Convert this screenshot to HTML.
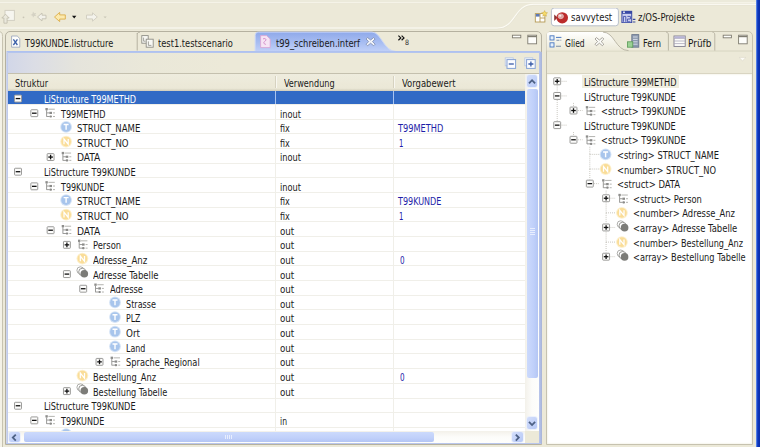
<!DOCTYPE html><html><head><meta charset="utf-8"><title>savvytest</title><style>
html,body{margin:0;padding:0;}body{width:760px;height:447px;overflow:hidden;position:relative;background:#ECE9D8;font-family:"DejaVu Sans Condensed", "Liberation Sans", sans-serif;font-size:9.7px;}
body div,body svg{position:absolute;}
.t{position:absolute;white-space:pre;line-height:14px;height:14px;transform-origin:0 50%;display:block;}
</style></head><body>
<div style="left:0.00px;top:0.00px;width:760.00px;height:2.00px;background:#ECEADB;"></div>
<div style="left:0.00px;top:2.00px;width:760.00px;height:1.00px;background:#F5F3E8;"></div>
<div style="left:0.00px;top:3.00px;width:760.00px;height:1.00px;background:#EBE8D8;"></div>
<svg style="left:0;top:0;width:760px;height:34px" viewBox="0 0 760 34"><path d="M0 28.2 H497 C516 28.2 514 4.4 533 4.4 H760" fill="none" stroke="#FCFBF5" stroke-width="1.2"/><path d="M0 29.2 H497 C516.6 29.2 514.6 5.4 533 5.4 H760" fill="none" stroke="#E6E3D3" stroke-width="0.8"/></svg>
<svg style="left:0;top:6px;width:120px;height:22px" viewBox="0 6 120 22">
<rect x="5" y="10.4" width="9.4" height="10" fill="#F6F5EF" stroke="#D2CFC2" stroke-width="1"/>
<path d="M1.8 18 l3.7-3.8 l3.7 3.8 h-2.1 v5.2 h-3.2 v-5.2z" fill="#EAE8DC" stroke="#BFBBAB" stroke-width="0.8"/>
<circle cx="23.5" cy="17.3" r="0.9" fill="#C9C6B6"/>
<path d="M33 11.5 l1.2 1.8 l2-0.4 l-1 1.8 l1 1.4 l-2 0 l-1.2 1.6 l-0.4-2 l-2-0.6 l1.8-1 z" fill="#D5D2C4"/>
<path d="M37.5 17 l4.5-4 v2.2 h4 v3.6 h-4 v2.2z" fill="#F2F1EA" stroke="#C4C1B2" stroke-width="0.9"/>
<path d="M54.5 17 l5.2-4.6 v2.5 h5.6 v4.2 h-5.6 v2.5z" fill="#FCEAAE" stroke="#DCAE48" stroke-width="0.9" stroke-linejoin="round"/>
<path d="M72 15.8 h4.4 l-2.2 2.6z" fill="#111"/>
<path d="M97.3 17 l-4.8-4.2 v2.3 h-6 v3.8 h6 v2.3z" fill="#F4F3EC" stroke="#CFCCBE" stroke-width="0.9"/>
<path d="M103.5 16.4 h3.2 l-1.6 1.9z" fill="#C9C6B6"/>
</svg>
<svg style="left:533px;top:8px;width:110px;height:20px" viewBox="533 8 110 20">
<rect x="535.3" y="13.6" width="9.6" height="8.4" fill="#FFFFFF" stroke="#B59A55" stroke-width="0.9"/>
<rect x="535.8" y="14" width="4" height="2.6" fill="#5C79B8"/>
<path d="M540 14 v8 M540 18 h5" stroke="#B59A55" stroke-width="0.9"/>
<path d="M544.6 10.6 l0.9 1.9 l2 0.3 l-1.5 1.4 l0.4 2 l-1.8-1 l-1.8 1 l0.4-2 l-1.5-1.4 l2-0.3z" fill="#F7DC6A" stroke="#C9A43A" stroke-width="0.5"/>
<rect x="551.4" y="8" width="67" height="17.8" rx="2.8" fill="#FFFFFF" stroke="#B9C0CB" stroke-width="1"/>
<path d="M554.2 14.4 l3.4 3.2 l-3.4 3.4z" fill="#8E3434"/>
<ellipse cx="562.2" cy="17.8" rx="5.8" ry="5.6" fill="#BC2C2C"/>
<ellipse cx="560.8" cy="16.3" rx="2.7" ry="2.4" fill="#DDA2A0" stroke="#E9D4D2" stroke-width="0.6"/>
<ellipse cx="560.2" cy="15.8" rx="1.2" ry="1" fill="#F8ECEA"/>
<rect x="621.4" y="10.8" width="10.8" height="12.2" fill="#3848A4"/>
<rect x="622.4" y="13.8" width="8.8" height="8.4" fill="#CDD0EE"/>
<rect x="623" y="11.6" width="2" height="1.2" fill="#F4F6FF"/>
<path d="M623.4 21.8 v-5.4 h2.4 v5.4 M627.4 16.4 h3 v2.6 h-3 v2.8 h3" stroke="#4A58B0" stroke-width="1" fill="none"/>
<path d="M632.8 19.4 h2.6 M632.8 22 h2.6" stroke="#3B4A9A" stroke-width="1.1"/>
</svg>
<svg style="left:0;top:30px;width:5px;height:417px" viewBox="0 30 5 417"><path d="M0 31.8 C1.8 32 2.5 33.5 2.5 36.5 V447 H0Z" fill="#F4F2E7"/><path d="M0 31.8 C1.8 32 2.5 33.5 2.5 36.5 V447" fill="none" stroke="#C2BEAB" stroke-width="0.9"/></svg>
<div style="left:5.00px;top:31.00px;width:537.00px;height:414.00px;box-sizing:border-box;border:1px solid #B5B1A0;border-radius:5px 5px 0 0;background:#ECE9D8;"></div>
<div style="left:6.00px;top:52.60px;width:535.00px;height:21.00px;background:linear-gradient(90deg,#D1D6E8 0px,#DBDDE5 28px,#E5E4DC 70px,#EAE8D9 140px,#ECE9D8 220px);"></div>
<svg style="left:6px;top:31px;width:536px;height:24px" viewBox="6 31 536 24">
<defs><linearGradient id="tg" x1="0" y1="0" x2="0" y2="1"><stop offset="0" stop-color="#8FA9EA"/><stop offset="0.55" stop-color="#A9BEF2"/><stop offset="1" stop-color="#C3D2F8"/></linearGradient></defs>
<path d="M255.2 52 V35.5 C255.2 33.2 256.6 32.1 258.6 32.1 H372 C381 32.1 384 52 396 52 Z" fill="url(#tg)"/>
<path d="M255.2 52 V35.5 C255.2 33.2 256.6 32.1 258.6 32.1 H372 C381 32.1 384 51.5 396 51.5" fill="none" stroke="#C9D6F8" stroke-width="1"/>
<rect x="6.5" y="51" width="534" height="1.9" fill="#AFC1F0"/>
<path d="M137.2 33 V50.5" stroke="#B5B1A0" stroke-width="1"/>
<path d="M137.2 34 C137.6 32.6 138.6 32.1 140 32.1" stroke="#B5B1A0" fill="none" stroke-width="1"/>
</svg>
<div style="left:6.00px;top:52.00px;width:2.00px;height:392.00px;background:linear-gradient(90deg,#D5DAEA,#B9C6EC);"></div>
<div style="left:539.00px;top:52.00px;width:3.00px;height:392.00px;background:linear-gradient(90deg,#B9C6EC,#AEBBE2 60%,#A9B3D2);"></div>
<div style="left:6.00px;top:443.00px;width:535.00px;height:1.00px;background:#B9C6EC;"></div>
<svg style="left:9px;top:34px;width:380px;height:16px" viewBox="9 34 380 16">
<path d="M11.6 36 h5.6 l2.6 2.6 v8.6 h-8.2z" fill="#FDFDFB" stroke="#9FA9BD" stroke-width="0.9"/>
<path d="M13.4 39.4 l4 5.6 M17.4 39.4 l-4 5.6" stroke="#3B5FA8" stroke-width="1.3"/>
<rect x="141.8" y="35.6" width="6.4" height="7.6" fill="#F8F8F4" stroke="#8E8E86" stroke-width="0.9"/>
<rect x="146.2" y="39.2" width="7" height="8" fill="#F8F8F4" stroke="#8E8E86" stroke-width="0.9"/>
<path d="M143.6 37.6 v3.6 h2 M148.4 41.4 v4 h3" stroke="#8E8E86" stroke-width="0.8" fill="none"/>
<path d="M260.6 35.6 h6 l3.6 3.4 v8.6 h-9.6z" fill="#F6E4F4" stroke="#D9A6D6" stroke-width="0.9"/>
<path d="M263 39 c2.2-1.4 4 0.6 2.2 2 c-1.6 1.2-2.4 2.4 0.6 3.4" stroke="#D48BC9" stroke-width="1" fill="none"/>
<path d="M367.6 37.6 l3 2.4 l3-2.4 l1.5 1.4 l-2.6 2.6 l2.6 2.6 l-1.5 1.5 l-3-2.5 l-3 2.5 l-1.5-1.5 l2.6-2.6 l-2.6-2.6z" fill="#F4F6FC" stroke="#6F7C9F" stroke-width="0.7"/>
</svg>
<svg style="left:396px;top:33px;width:20px;height:16px" viewBox="396 33 20 16"><path d="M398.4 35.6 l2.4 2.3 l-2.4 2.3 M401.6 35.6 l2.4 2.3 l-2.4 2.3" stroke="#111" stroke-width="1.2" fill="none"/></svg>
<svg style="left:508px;top:32px;width:32px;height:16px" viewBox="508 32 32 16">
<rect x="512.4" y="35.2" width="8.4" height="2.6" fill="#FDFDFA" stroke="#7F7C70" stroke-width="0.9"/>
<rect x="527.8" y="35.2" width="8.8" height="8.6" fill="#FDFDFA" stroke="#7F7C70" stroke-width="0.9"/>
<path d="M527.8 36.6 h8.8" stroke="#7F7C70" stroke-width="1.2"/>
</svg>
<svg style="left:502px;top:55px;width:38px;height:16px" viewBox="502 55 38 16">
<rect x="505.2" y="57.8" width="8" height="8" fill="#EAEFF8" stroke="#B9C8E2" stroke-width="0.8"/>
<rect x="507" y="59.6" width="8.6" height="8.8" fill="#FBFCFE" stroke="#86A2D4" stroke-width="1"/>
<path d="M508.8 64 h5" stroke="#3A5CA8" stroke-width="1.3"/>
<rect x="524.8" y="57.8" width="8" height="8" fill="#EAEFF8" stroke="#B9C8E2" stroke-width="0.8"/>
<rect x="526.6" y="59.6" width="8.6" height="8.8" fill="#FBFCFE" stroke="#86A2D4" stroke-width="1"/>
<path d="M528.4 64 h5 M530.9 61.5 v5" stroke="#3A5CA8" stroke-width="1.3"/>
</svg>
<div style="left:8.00px;top:73.60px;width:531.00px;height:357.60px;background:#fff;"></div>
<div style="left:8.00px;top:74.00px;width:517.00px;height:17.00px;background:linear-gradient(180deg,#EEECDE 0%,#ECE9D8 60%,#EBE8D7 84%,#DEDBC9 92%,#D0CCBA 100%);"></div>
<div style="left:8.00px;top:73.00px;width:531.00px;height:1.00px;background:#C4C0AE;"></div>
<div style="left:274.70px;top:76.10px;width:1.00px;height:12.00px;background:#D6D2C0;"></div>
<div style="left:275.70px;top:76.10px;width:1.00px;height:12.00px;background:#F8F7F0;"></div>
<div style="left:392.50px;top:76.10px;width:1.00px;height:12.00px;background:#D6D2C0;"></div>
<div style="left:393.50px;top:76.10px;width:1.00px;height:12.00px;background:#F8F7F0;"></div>
<div style="left:8.00px;top:103.82px;width:517.00px;height:0.90px;background:#F0EFE9;"></div>
<div style="left:8.00px;top:90.60px;width:517.00px;height:13.90px;background:#316AC5;"></div>
<div style="left:275.00px;top:90.60px;width:1.00px;height:13.90px;background:#A9C4F0;"></div>
<div style="left:392.80px;top:90.60px;width:1.00px;height:13.90px;background:#A9C4F0;"></div>
<div style="left:8.00px;top:118.50px;width:517.00px;height:0.90px;background:#F0EFE9;"></div>
<div style="left:8.00px;top:133.19px;width:517.00px;height:0.90px;background:#F0EFE9;"></div>
<div style="left:8.00px;top:147.87px;width:517.00px;height:0.90px;background:#F0EFE9;"></div>
<div style="left:8.00px;top:162.56px;width:517.00px;height:0.90px;background:#F0EFE9;"></div>
<div style="left:8.00px;top:177.24px;width:517.00px;height:0.90px;background:#F0EFE9;"></div>
<div style="left:8.00px;top:191.92px;width:517.00px;height:0.90px;background:#F0EFE9;"></div>
<div style="left:8.00px;top:206.61px;width:517.00px;height:0.90px;background:#F0EFE9;"></div>
<div style="left:8.00px;top:221.29px;width:517.00px;height:0.90px;background:#F0EFE9;"></div>
<div style="left:8.00px;top:235.98px;width:517.00px;height:0.90px;background:#F0EFE9;"></div>
<div style="left:8.00px;top:250.66px;width:517.00px;height:0.90px;background:#F0EFE9;"></div>
<div style="left:8.00px;top:265.34px;width:517.00px;height:0.90px;background:#F0EFE9;"></div>
<div style="left:8.00px;top:280.03px;width:517.00px;height:0.90px;background:#F0EFE9;"></div>
<div style="left:8.00px;top:294.71px;width:517.00px;height:0.90px;background:#F0EFE9;"></div>
<div style="left:8.00px;top:309.40px;width:517.00px;height:0.90px;background:#F0EFE9;"></div>
<div style="left:8.00px;top:324.08px;width:517.00px;height:0.90px;background:#F0EFE9;"></div>
<div style="left:8.00px;top:338.76px;width:517.00px;height:0.90px;background:#F0EFE9;"></div>
<div style="left:8.00px;top:353.45px;width:517.00px;height:0.90px;background:#F0EFE9;"></div>
<div style="left:8.00px;top:368.13px;width:517.00px;height:0.90px;background:#F0EFE9;"></div>
<div style="left:8.00px;top:382.82px;width:517.00px;height:0.90px;background:#F0EFE9;"></div>
<div style="left:8.00px;top:397.50px;width:517.00px;height:0.90px;background:#F0EFE9;"></div>
<div style="left:8.00px;top:412.18px;width:517.00px;height:0.90px;background:#F0EFE9;"></div>
<div style="left:8.00px;top:426.87px;width:517.00px;height:0.90px;background:#F0EFE9;"></div>
<div style="left:275.00px;top:104.80px;width:0.90px;height:326.40px;background:#F0EFE9;"></div>
<div style="left:392.80px;top:104.80px;width:0.90px;height:326.40px;background:#F0EFE9;"></div>
<svg style="left:0;top:0;width:545px;height:431.2px;overflow:hidden" viewBox="0 0 545 431.2"><rect x="14.55" y="95.12" width="6.90" height="6.90" rx="0.6" fill="#FDFDFC" stroke="#9A9A98" stroke-width="1"/><path d="M15.70 98.57 h4.6" stroke="#111" stroke-width="1.3"/><rect x="30.85" y="109.75" width="6.90" height="6.90" rx="0.6" fill="#FDFDFC" stroke="#9A9A98" stroke-width="1"/><path d="M32.00 113.20 h4.6" stroke="#111" stroke-width="1.3"/><rect x="45.40" y="108.00" width="2.4" height="2.3" fill="#8E8E8C"/><path d="M48.40 109.20 h6.4" stroke="#B4B4B0" stroke-width="1"/><path d="M46.60 110.10 v6.6" stroke="#9A9A98" stroke-width="1"/><path d="M46.60 112.90 h3 M46.60 116.50 h3" stroke="#9A9A98" stroke-width="1"/><rect x="49.40" y="111.80" width="2.6" height="2.2" fill="#8A8A88"/><rect x="49.40" y="115.40" width="2.6" height="2.2" rx="1" fill="#8A8A88"/><path d="M53.00 112.90 h2 M53.00 116.50 h2" stroke="#B4B4B0" stroke-width="1"/><circle cx="66.10" cy="126.93" r="5.9" fill="#D6E4F6"/><circle cx="66.10" cy="126.93" r="4.9" fill="#A8C5EC"/><path d="M63.60 124.53 h5 M66.10 124.53 v5.2" stroke="#fff" stroke-width="1.4" fill="none"/><circle cx="66.10" cy="141.55" r="5.9" fill="#FDF0CE"/><circle cx="66.10" cy="141.55" r="4.9" fill="#FADD98"/><path d="M64.00 144.25 v-5.2 l4.2 5.2 v-5.2" stroke="#fff" stroke-width="1.25" fill="none"/><rect x="47.15" y="153.63" width="6.90" height="6.90" rx="0.6" fill="#FDFDFC" stroke="#9A9A98" stroke-width="1"/><path d="M48.30 157.08 h4.6" stroke="#111" stroke-width="1.3"/><path d="M50.60 154.78 v4.6" stroke="#111" stroke-width="1.3"/><rect x="61.70" y="151.88" width="2.4" height="2.3" fill="#8E8E8C"/><path d="M64.70 153.08 h6.4" stroke="#B4B4B0" stroke-width="1"/><path d="M62.90 153.98 v6.6" stroke="#9A9A98" stroke-width="1"/><path d="M62.90 156.78 h3 M62.90 160.38 h3" stroke="#9A9A98" stroke-width="1"/><rect x="65.70" y="155.68" width="2.6" height="2.2" fill="#8A8A88"/><rect x="65.70" y="159.28" width="2.6" height="2.2" rx="1" fill="#8A8A88"/><path d="M69.30 156.78 h2 M69.30 160.38 h2" stroke="#B4B4B0" stroke-width="1"/><rect x="14.55" y="168.26" width="6.90" height="6.90" rx="0.6" fill="#FDFDFC" stroke="#9A9A98" stroke-width="1"/><path d="M15.70 171.71 h4.6" stroke="#111" stroke-width="1.3"/><rect x="30.85" y="182.89" width="6.90" height="6.90" rx="0.6" fill="#FDFDFC" stroke="#9A9A98" stroke-width="1"/><path d="M32.00 186.34 h4.6" stroke="#111" stroke-width="1.3"/><rect x="45.40" y="181.14" width="2.4" height="2.3" fill="#8E8E8C"/><path d="M48.40 182.34 h6.4" stroke="#B4B4B0" stroke-width="1"/><path d="M46.60 183.24 v6.6" stroke="#9A9A98" stroke-width="1"/><path d="M46.60 186.04 h3 M46.60 189.64 h3" stroke="#9A9A98" stroke-width="1"/><rect x="49.40" y="184.94" width="2.6" height="2.2" fill="#8A8A88"/><rect x="49.40" y="188.54" width="2.6" height="2.2" rx="1" fill="#8A8A88"/><path d="M53.00 186.04 h2 M53.00 189.64 h2" stroke="#B4B4B0" stroke-width="1"/><circle cx="66.10" cy="200.07" r="5.9" fill="#D6E4F6"/><circle cx="66.10" cy="200.07" r="4.9" fill="#A8C5EC"/><path d="M63.60 197.67 h5 M66.10 197.67 v5.2" stroke="#fff" stroke-width="1.4" fill="none"/><circle cx="66.10" cy="214.69" r="5.9" fill="#FDF0CE"/><circle cx="66.10" cy="214.69" r="4.9" fill="#FADD98"/><path d="M64.00 217.39 v-5.2 l4.2 5.2 v-5.2" stroke="#fff" stroke-width="1.25" fill="none"/><rect x="47.15" y="226.77" width="6.90" height="6.90" rx="0.6" fill="#FDFDFC" stroke="#9A9A98" stroke-width="1"/><path d="M48.30 230.22 h4.6" stroke="#111" stroke-width="1.3"/><rect x="61.70" y="225.02" width="2.4" height="2.3" fill="#8E8E8C"/><path d="M64.70 226.22 h6.4" stroke="#B4B4B0" stroke-width="1"/><path d="M62.90 227.12 v6.6" stroke="#9A9A98" stroke-width="1"/><path d="M62.90 229.92 h3 M62.90 233.52 h3" stroke="#9A9A98" stroke-width="1"/><rect x="65.70" y="228.82" width="2.6" height="2.2" fill="#8A8A88"/><rect x="65.70" y="232.42" width="2.6" height="2.2" rx="1" fill="#8A8A88"/><path d="M69.30 229.92 h2 M69.30 233.52 h2" stroke="#B4B4B0" stroke-width="1"/><rect x="63.45" y="241.40" width="6.90" height="6.90" rx="0.6" fill="#FDFDFC" stroke="#9A9A98" stroke-width="1"/><path d="M64.60 244.85 h4.6" stroke="#111" stroke-width="1.3"/><path d="M66.90 242.55 v4.6" stroke="#111" stroke-width="1.3"/><rect x="78.00" y="239.65" width="2.4" height="2.3" fill="#8E8E8C"/><path d="M81.00 240.85 h6.4" stroke="#B4B4B0" stroke-width="1"/><path d="M79.20 241.75 v6.6" stroke="#9A9A98" stroke-width="1"/><path d="M79.20 244.55 h3 M79.20 248.15 h3" stroke="#9A9A98" stroke-width="1"/><rect x="82.00" y="243.45" width="2.6" height="2.2" fill="#8A8A88"/><rect x="82.00" y="247.05" width="2.6" height="2.2" rx="1" fill="#8A8A88"/><path d="M85.60 244.55 h2 M85.60 248.15 h2" stroke="#B4B4B0" stroke-width="1"/><circle cx="82.40" cy="258.58" r="5.9" fill="#FDF0CE"/><circle cx="82.40" cy="258.58" r="4.9" fill="#FADD98"/><path d="M80.30 261.28 v-5.2 l4.2 5.2 v-5.2" stroke="#fff" stroke-width="1.25" fill="none"/><rect x="63.45" y="270.66" width="6.90" height="6.90" rx="0.6" fill="#FDFDFC" stroke="#9A9A98" stroke-width="1"/><path d="M64.60 274.11 h4.6" stroke="#111" stroke-width="1.3"/><circle cx="80.40" cy="270.31" r="3.5" fill="#fff" stroke="#A4A4A0" stroke-width="0.9"/><circle cx="82.30" cy="271.91" r="3.6" fill="#fff" stroke="#8C8C88" stroke-width="0.9"/><circle cx="84.30" cy="273.71" r="3.8" fill="#7C7C78"/><rect x="79.75" y="285.28" width="6.90" height="6.90" rx="0.6" fill="#FDFDFC" stroke="#9A9A98" stroke-width="1"/><path d="M80.90 288.73 h4.6" stroke="#111" stroke-width="1.3"/><rect x="94.30" y="283.53" width="2.4" height="2.3" fill="#8E8E8C"/><path d="M97.30 284.73 h6.4" stroke="#B4B4B0" stroke-width="1"/><path d="M95.50 285.63 v6.6" stroke="#9A9A98" stroke-width="1"/><path d="M95.50 288.43 h3 M95.50 292.03 h3" stroke="#9A9A98" stroke-width="1"/><rect x="98.30" y="287.33" width="2.6" height="2.2" fill="#8A8A88"/><rect x="98.30" y="290.93" width="2.6" height="2.2" rx="1" fill="#8A8A88"/><path d="M101.90 288.43 h2 M101.90 292.03 h2" stroke="#B4B4B0" stroke-width="1"/><circle cx="115.00" cy="302.46" r="5.9" fill="#D6E4F6"/><circle cx="115.00" cy="302.46" r="4.9" fill="#A8C5EC"/><path d="M112.50 300.06 h5 M115.00 300.06 v5.2" stroke="#fff" stroke-width="1.4" fill="none"/><circle cx="115.00" cy="317.09" r="5.9" fill="#D6E4F6"/><circle cx="115.00" cy="317.09" r="4.9" fill="#A8C5EC"/><path d="M112.50 314.69 h5 M115.00 314.69 v5.2" stroke="#fff" stroke-width="1.4" fill="none"/><circle cx="115.00" cy="331.72" r="5.9" fill="#D6E4F6"/><circle cx="115.00" cy="331.72" r="4.9" fill="#A8C5EC"/><path d="M112.50 329.32 h5 M115.00 329.32 v5.2" stroke="#fff" stroke-width="1.4" fill="none"/><circle cx="115.00" cy="346.35" r="5.9" fill="#D6E4F6"/><circle cx="115.00" cy="346.35" r="4.9" fill="#A8C5EC"/><path d="M112.50 343.95 h5 M115.00 343.95 v5.2" stroke="#fff" stroke-width="1.4" fill="none"/><rect x="96.05" y="358.42" width="6.90" height="6.90" rx="0.6" fill="#FDFDFC" stroke="#9A9A98" stroke-width="1"/><path d="M97.20 361.87 h4.6" stroke="#111" stroke-width="1.3"/><path d="M99.50 359.57 v4.6" stroke="#111" stroke-width="1.3"/><rect x="110.60" y="356.67" width="2.4" height="2.3" fill="#8E8E8C"/><path d="M113.60 357.87 h6.4" stroke="#B4B4B0" stroke-width="1"/><path d="M111.80 358.77 v6.6" stroke="#9A9A98" stroke-width="1"/><path d="M111.80 361.57 h3 M111.80 365.17 h3" stroke="#9A9A98" stroke-width="1"/><rect x="114.60" y="360.47" width="2.6" height="2.2" fill="#8A8A88"/><rect x="114.60" y="364.07" width="2.6" height="2.2" rx="1" fill="#8A8A88"/><path d="M118.20 361.57 h2 M118.20 365.17 h2" stroke="#B4B4B0" stroke-width="1"/><circle cx="82.40" cy="375.60" r="5.9" fill="#FDF0CE"/><circle cx="82.40" cy="375.60" r="4.9" fill="#FADD98"/><path d="M80.30 378.30 v-5.2 l4.2 5.2 v-5.2" stroke="#fff" stroke-width="1.25" fill="none"/><rect x="63.45" y="387.68" width="6.90" height="6.90" rx="0.6" fill="#FDFDFC" stroke="#9A9A98" stroke-width="1"/><path d="M64.60 391.13 h4.6" stroke="#111" stroke-width="1.3"/><path d="M66.90 388.83 v4.6" stroke="#111" stroke-width="1.3"/><circle cx="80.40" cy="387.33" r="3.5" fill="#fff" stroke="#A4A4A0" stroke-width="0.9"/><circle cx="82.30" cy="388.93" r="3.6" fill="#fff" stroke="#8C8C88" stroke-width="0.9"/><circle cx="84.30" cy="390.73" r="3.8" fill="#7C7C78"/><rect x="14.55" y="402.31" width="6.90" height="6.90" rx="0.6" fill="#FDFDFC" stroke="#9A9A98" stroke-width="1"/><path d="M15.70 405.76 h4.6" stroke="#111" stroke-width="1.3"/><rect x="30.85" y="416.94" width="6.90" height="6.90" rx="0.6" fill="#FDFDFC" stroke="#9A9A98" stroke-width="1"/><path d="M32.00 420.39 h4.6" stroke="#111" stroke-width="1.3"/><rect x="45.40" y="415.19" width="2.4" height="2.3" fill="#8E8E8C"/><path d="M48.40 416.39 h6.4" stroke="#B4B4B0" stroke-width="1"/><path d="M46.60 417.29 v6.6" stroke="#9A9A98" stroke-width="1"/><path d="M46.60 420.09 h3 M46.60 423.69 h3" stroke="#9A9A98" stroke-width="1"/><rect x="49.40" y="418.99" width="2.6" height="2.2" fill="#8A8A88"/><rect x="49.40" y="422.59" width="2.6" height="2.2" rx="1" fill="#8A8A88"/><path d="M53.00 420.09 h2 M53.00 423.69 h2" stroke="#B4B4B0" stroke-width="1"/><circle cx="66.10" cy="434.11" r="5.9" fill="#D6E4F6"/><circle cx="66.10" cy="434.11" r="4.9" fill="#A8C5EC"/><path d="M63.60 431.71 h5 M66.10 431.71 v5.2" stroke="#fff" stroke-width="1.4" fill="none"/></svg>
<div style="left:525.00px;top:73.60px;width:14.00px;height:357.60px;background:linear-gradient(90deg,#F3F1EA,#FCFCFA 50%,#FEFEFC);"></div>
<div style="left:527.00px;top:75.40px;width:10.40px;height:11.60px;background:linear-gradient(135deg,#D3DEFB,#B7C9F6);border-radius:2px;box-shadow:0 0 0 0.7px #E8EEFC;"></div>
<svg style="left:526.4px;top:74.8px;width:11.6px;height:12.8px" viewBox="0 0 11.6 12.8"><path d="M3 8.4 l3.05-3.2 l3.05 3.2" fill="none" stroke="#4D6185" stroke-width="1.8"/></svg>
<div style="left:527.00px;top:417.20px;width:10.40px;height:11.60px;background:linear-gradient(135deg,#D3DEFB,#B7C9F6);border-radius:2px;box-shadow:0 0 0 0.7px #E8EEFC;"></div>
<svg style="left:526.4px;top:416.6px;width:11.6px;height:12.8px" viewBox="0 0 11.6 12.8"><path d="M3 4.8 l3.05 3.2 l3.05-3.2" fill="none" stroke="#4D6185" stroke-width="1.8"/></svg>
<div style="left:527.00px;top:88.80px;width:11.40px;height:289.20px;background:linear-gradient(90deg,#CCDAFC,#C0D0FA 60%,#B4C6F4);border-radius:2px;"></div>
<div style="left:530.00px;top:227.60px;width:5.00px;height:0.90px;background:#E8EEFE;"></div>
<div style="left:530.00px;top:229.60px;width:5.00px;height:0.90px;background:#E8EEFE;"></div>
<div style="left:530.00px;top:231.60px;width:5.00px;height:0.90px;background:#E8EEFE;"></div>
<div style="left:530.00px;top:233.60px;width:5.00px;height:0.90px;background:#E8EEFE;"></div>
<div style="left:8.00px;top:431.20px;width:531.00px;height:11.80px;background:#ECE9D8;"></div>
<div style="left:8.00px;top:431.20px;width:517.00px;height:11.80px;background:linear-gradient(180deg,#F3F1EA,#FCFCFA 50%,#FEFEFC);"></div>
<div style="left:9.00px;top:432.20px;width:11.40px;height:10.00px;background:linear-gradient(135deg,#D3DEFB,#B7C9F6);border-radius:2px;box-shadow:0 0 0 0.7px #E8EEFC;"></div>
<svg style="left:8.4px;top:431.59999999999997px;width:12.6px;height:11.2px" viewBox="0 0 12.6 11.2"><path d="M7.8 2.6 l-3 3 l3 3" fill="none" stroke="#4D6185" stroke-width="1.8"/></svg>
<div style="left:511.60px;top:432.20px;width:11.40px;height:10.00px;background:linear-gradient(135deg,#D3DEFB,#B7C9F6);border-radius:2px;box-shadow:0 0 0 0.7px #E8EEFC;"></div>
<svg style="left:511px;top:431.59999999999997px;width:12.6px;height:11.2px" viewBox="0 0 12.6 11.2"><path d="M4.8 2.6 l3 3 l-3 3" fill="none" stroke="#4D6185" stroke-width="1.8"/></svg>
<div style="left:24.00px;top:432.40px;width:410.00px;height:9.60px;background:linear-gradient(180deg,#CCDAFC,#C0D0FA 60%,#B4C6F4);border-radius:2px;"></div>
<div style="left:224.60px;top:434.80px;width:0.90px;height:4.60px;background:#E8EEFE;"></div>
<div style="left:226.60px;top:434.80px;width:0.90px;height:4.60px;background:#E8EEFE;"></div>
<div style="left:228.60px;top:434.80px;width:0.90px;height:4.60px;background:#E8EEFE;"></div>
<div style="left:230.60px;top:434.80px;width:0.90px;height:4.60px;background:#E8EEFE;"></div>
<div style="left:545.60px;top:31.00px;width:207.40px;height:413.70px;box-sizing:border-box;border:1px solid #C6C2AF;border-radius:5px 5px 0 0;background:#ECE9D8;"></div>
<div style="left:546.60px;top:73.50px;width:205.40px;height:370.20px;background:#fff;box-shadow:inset 0 0 1.5px 0.5px #F3F1E4;"></div>
<div style="left:546.60px;top:72.90px;width:205.40px;height:0.80px;background:#D9D5C2;"></div>
<svg style="left:545px;top:31px;width:210px;height:24px" viewBox="545 31 210 24">
<defs><linearGradient id="gt" x1="0" y1="0" x2="0" y2="1"><stop offset="0" stop-color="#FFFFFE"/><stop offset="0.45" stop-color="#F6F5EC"/><stop offset="1" stop-color="#ECE9D8"/></linearGradient></defs>
<path d="M546.4 51 H752" stroke="#D6D2C0" stroke-width="0.9"/>
<path d="M546.6 50.6 V36 C546.6 33 548 32.1 550 32.1 H603 C614.5 32.1 615.5 50.6 628.5 50.6 H547 Z" fill="url(#gt)" stroke="none"/>
<path d="M603 32.1 C614.5 32.1 615.5 50.6 628.5 50.6" fill="none" stroke="#B5B1A0" stroke-width="0.9"/>
<path d="M668.4 50.6 V35 C668.4 33 667.4 32.1 666 32.1 M714.8 50.6 V35 C714.8 33 713.8 32.1 712.4 32.1" fill="none" stroke="#B5B1A0" stroke-width="0.9"/>
</svg>
<svg style="left:547px;top:33px;width:205px;height:30px" viewBox="547 33 205 30">
<rect x="550" y="35.8" width="4" height="4.2" fill="#E6F0FB" stroke="#4A78C2" stroke-width="0.9"/>
<rect x="550" y="42.8" width="4" height="4.2" fill="#E6F0FB" stroke="#4A78C2" stroke-width="0.9"/>
<path d="M556 37.4 h5.4" stroke="#4A78C2" stroke-width="1"/>
<path d="M556.4 40.2 h3 M556 46.2 h5" stroke="#7E8FA8" stroke-width="1.1"/>
<path d="M560.2 40.2 h1.2" stroke="#9AA6B8" stroke-width="1"/>
<path d="M596.4 37.6 l3 2.4 l3-2.4 l1.4 1.4 l-2.6 2.6 l2.6 2.6 l-1.4 1.5 l-3-2.5 l-3 2.5 l-1.4-1.5 l2.6-2.6 l-2.6-2.6z" fill="#FBFBF8" stroke="#86837A" stroke-width="0.7"/>
<rect x="631.8" y="34.6" width="7" height="12.6" fill="#8C99AE" stroke="#66738A" stroke-width="0.8"/>
<path d="M633 37 h4.6 M633 39.4 h4.6 M633 41.8 h4.6 M633 44.2 h4.6" stroke="#DCE2EC" stroke-width="0.9"/>
<rect x="627.4" y="41.8" width="5.4" height="5.4" fill="#9AD194" stroke="#5A9A56" stroke-width="0.8"/>
<rect x="674" y="36" width="11.2" height="10.4" fill="#FCFCFA" stroke="#7D7B8C" stroke-width="0.9"/>
<path d="M674 38.4 h11.2 M674 41 h11.2 M674 43.6 h11.2" stroke="#A9A7B8" stroke-width="0.8"/>
<rect x="674.4" y="36.4" width="10.4" height="1.8" fill="#B7B4D6"/>
<rect x="723.2" y="35.2" width="8.2" height="2.6" fill="#FDFDFA" stroke="#7F7C70" stroke-width="0.9"/>
<rect x="738.6" y="35.2" width="8.6" height="8.6" fill="#FDFDFA" stroke="#7F7C70" stroke-width="0.9"/>
<path d="M738.6 36.6 h8.6" stroke="#7F7C70" stroke-width="1.2"/>
<path d="M739 57.4 h7 l-3.5 3.4z" fill="#FCFBF6" stroke="#DAD7C8" stroke-width="0.6"/>
</svg>
<div style="left:582.20px;top:75.40px;width:96.80px;height:13.00px;background:#EFEDDF;"></div>
<svg style="left:545px;top:70px;width:210px;height:200px" viewBox="545 70 210 200"><path d="M557.20 85.50 V91.72" stroke="#BDBBB2" stroke-width="0.9" stroke-dasharray="0.9 1.1"/><path d="M557.20 100.12 V120.95" stroke="#BDBBB2" stroke-width="0.9" stroke-dasharray="0.9 1.1"/><path d="M573.50 102.92 V106.33" stroke="#BDBBB2" stroke-width="0.9" stroke-dasharray="0.9 1.1"/><path d="M573.50 132.15 V135.57" stroke="#BDBBB2" stroke-width="0.9" stroke-dasharray="0.9 1.1"/><path d="M589.80 146.77 V154.38" stroke="#BDBBB2" stroke-width="0.9" stroke-dasharray="0.9 1.1"/><path d="M589.80 154.38 V169.00" stroke="#BDBBB2" stroke-width="0.9" stroke-dasharray="0.9 1.1"/><path d="M589.80 169.00 V179.42" stroke="#BDBBB2" stroke-width="0.9" stroke-dasharray="0.9 1.1"/><path d="M606.10 190.62 V194.04" stroke="#BDBBB2" stroke-width="0.9" stroke-dasharray="0.9 1.1"/><path d="M606.10 202.44 V212.85" stroke="#BDBBB2" stroke-width="0.9" stroke-dasharray="0.9 1.1"/><path d="M606.10 212.85 V223.27" stroke="#BDBBB2" stroke-width="0.9" stroke-dasharray="0.9 1.1"/><path d="M606.10 231.67 V242.09" stroke="#BDBBB2" stroke-width="0.9" stroke-dasharray="0.9 1.1"/><path d="M606.10 242.09 V252.50" stroke="#BDBBB2" stroke-width="0.9" stroke-dasharray="0.9 1.1"/><path d="M561.60 81.30 H566.70" stroke="#BDBBB2" stroke-width="0.9" stroke-dasharray="0.9 1.1"/><rect x="553.75" y="77.85" width="6.90" height="6.90" rx="0.6" fill="#FDFDFC" stroke="#9A9A98" stroke-width="1"/><path d="M554.90 81.30 h4.6" stroke="#111" stroke-width="1.3"/><path d="M557.20 79.00 v4.6" stroke="#111" stroke-width="1.3"/><path d="M561.60 95.92 H566.70" stroke="#BDBBB2" stroke-width="0.9" stroke-dasharray="0.9 1.1"/><rect x="553.75" y="92.47" width="6.90" height="6.90" rx="0.6" fill="#FDFDFC" stroke="#9A9A98" stroke-width="1"/><path d="M554.90 95.92 h4.6" stroke="#111" stroke-width="1.3"/><path d="M577.90 110.53 H582.50" stroke="#BDBBB2" stroke-width="0.9" stroke-dasharray="0.9 1.1"/><rect x="570.05" y="107.08" width="6.90" height="6.90" rx="0.6" fill="#FDFDFC" stroke="#9A9A98" stroke-width="1"/><path d="M571.20 110.53 h4.6" stroke="#111" stroke-width="1.3"/><path d="M573.50 108.23 v4.6" stroke="#111" stroke-width="1.3"/><rect x="585.80" y="106.13" width="2.4" height="2.3" fill="#8E8E8C"/><path d="M588.80 107.33 h6.4" stroke="#B4B4B0" stroke-width="1"/><path d="M587.00 108.23 v6.6" stroke="#9A9A98" stroke-width="1"/><path d="M587.00 111.03 h3 M587.00 114.63 h3" stroke="#9A9A98" stroke-width="1"/><rect x="589.80" y="109.93" width="2.6" height="2.2" fill="#8A8A88"/><rect x="589.80" y="113.53" width="2.6" height="2.2" rx="1" fill="#8A8A88"/><path d="M593.40 111.03 h2 M593.40 114.63 h2" stroke="#B4B4B0" stroke-width="1"/><path d="M561.60 125.15 H566.70" stroke="#BDBBB2" stroke-width="0.9" stroke-dasharray="0.9 1.1"/><rect x="553.75" y="121.70" width="6.90" height="6.90" rx="0.6" fill="#FDFDFC" stroke="#9A9A98" stroke-width="1"/><path d="M554.90 125.15 h4.6" stroke="#111" stroke-width="1.3"/><path d="M577.90 139.77 H582.50" stroke="#BDBBB2" stroke-width="0.9" stroke-dasharray="0.9 1.1"/><rect x="570.05" y="136.32" width="6.90" height="6.90" rx="0.6" fill="#FDFDFC" stroke="#9A9A98" stroke-width="1"/><path d="M571.20 139.77 h4.6" stroke="#111" stroke-width="1.3"/><rect x="585.80" y="135.37" width="2.4" height="2.3" fill="#8E8E8C"/><path d="M588.80 136.57 h6.4" stroke="#B4B4B0" stroke-width="1"/><path d="M587.00 137.47 v6.6" stroke="#9A9A98" stroke-width="1"/><path d="M587.00 140.27 h3 M587.00 143.87 h3" stroke="#9A9A98" stroke-width="1"/><rect x="589.80" y="139.17" width="2.6" height="2.2" fill="#8A8A88"/><rect x="589.80" y="142.77" width="2.6" height="2.2" rx="1" fill="#8A8A88"/><path d="M593.40 140.27 h2 M593.40 143.87 h2" stroke="#B4B4B0" stroke-width="1"/><path d="M589.80 154.38 H600.30" stroke="#BDBBB2" stroke-width="0.9" stroke-dasharray="0.9 1.1"/><circle cx="605.60" cy="154.38" r="5.9" fill="#D6E4F6"/><circle cx="605.60" cy="154.38" r="4.9" fill="#A8C5EC"/><path d="M603.10 151.98 h5 M605.60 151.98 v5.2" stroke="#fff" stroke-width="1.4" fill="none"/><path d="M589.80 169.00 H600.30" stroke="#BDBBB2" stroke-width="0.9" stroke-dasharray="0.9 1.1"/><circle cx="605.60" cy="169.00" r="5.9" fill="#FDF0CE"/><circle cx="605.60" cy="169.00" r="4.9" fill="#FADD98"/><path d="M603.50 171.70 v-5.2 l4.2 5.2 v-5.2" stroke="#fff" stroke-width="1.25" fill="none"/><path d="M594.20 183.62 H598.80" stroke="#BDBBB2" stroke-width="0.9" stroke-dasharray="0.9 1.1"/><rect x="586.35" y="180.17" width="6.90" height="6.90" rx="0.6" fill="#FDFDFC" stroke="#9A9A98" stroke-width="1"/><path d="M587.50 183.62 h4.6" stroke="#111" stroke-width="1.3"/><rect x="602.10" y="179.22" width="2.4" height="2.3" fill="#8E8E8C"/><path d="M605.10 180.42 h6.4" stroke="#B4B4B0" stroke-width="1"/><path d="M603.30 181.32 v6.6" stroke="#9A9A98" stroke-width="1"/><path d="M603.30 184.12 h3 M603.30 187.72 h3" stroke="#9A9A98" stroke-width="1"/><rect x="606.10" y="183.02" width="2.6" height="2.2" fill="#8A8A88"/><rect x="606.10" y="186.62" width="2.6" height="2.2" rx="1" fill="#8A8A88"/><path d="M609.70 184.12 h2 M609.70 187.72 h2" stroke="#B4B4B0" stroke-width="1"/><path d="M610.50 198.24 H615.10" stroke="#BDBBB2" stroke-width="0.9" stroke-dasharray="0.9 1.1"/><rect x="602.65" y="194.79" width="6.90" height="6.90" rx="0.6" fill="#FDFDFC" stroke="#9A9A98" stroke-width="1"/><path d="M603.80 198.24 h4.6" stroke="#111" stroke-width="1.3"/><path d="M606.10 195.94 v4.6" stroke="#111" stroke-width="1.3"/><rect x="618.40" y="193.84" width="2.4" height="2.3" fill="#8E8E8C"/><path d="M621.40 195.04 h6.4" stroke="#B4B4B0" stroke-width="1"/><path d="M619.60 195.94 v6.6" stroke="#9A9A98" stroke-width="1"/><path d="M619.60 198.74 h3 M619.60 202.34 h3" stroke="#9A9A98" stroke-width="1"/><rect x="622.40" y="197.64" width="2.6" height="2.2" fill="#8A8A88"/><rect x="622.40" y="201.24" width="2.6" height="2.2" rx="1" fill="#8A8A88"/><path d="M626.00 198.74 h2 M626.00 202.34 h2" stroke="#B4B4B0" stroke-width="1"/><path d="M606.10 212.85 H616.60" stroke="#BDBBB2" stroke-width="0.9" stroke-dasharray="0.9 1.1"/><circle cx="621.90" cy="212.85" r="5.9" fill="#FDF0CE"/><circle cx="621.90" cy="212.85" r="4.9" fill="#FADD98"/><path d="M619.80 215.55 v-5.2 l4.2 5.2 v-5.2" stroke="#fff" stroke-width="1.25" fill="none"/><path d="M610.50 227.47 H615.10" stroke="#BDBBB2" stroke-width="0.9" stroke-dasharray="0.9 1.1"/><rect x="602.65" y="224.02" width="6.90" height="6.90" rx="0.6" fill="#FDFDFC" stroke="#9A9A98" stroke-width="1"/><path d="M603.80 227.47 h4.6" stroke="#111" stroke-width="1.3"/><path d="M606.10 225.17 v4.6" stroke="#111" stroke-width="1.3"/><circle cx="620.70" cy="224.27" r="3.5" fill="#fff" stroke="#A4A4A0" stroke-width="0.9"/><circle cx="622.60" cy="225.87" r="3.6" fill="#fff" stroke="#8C8C88" stroke-width="0.9"/><circle cx="624.60" cy="227.67" r="3.8" fill="#7C7C78"/><path d="M606.10 242.09 H616.60" stroke="#BDBBB2" stroke-width="0.9" stroke-dasharray="0.9 1.1"/><circle cx="621.90" cy="242.09" r="5.9" fill="#FDF0CE"/><circle cx="621.90" cy="242.09" r="4.9" fill="#FADD98"/><path d="M619.80 244.79 v-5.2 l4.2 5.2 v-5.2" stroke="#fff" stroke-width="1.25" fill="none"/><path d="M610.50 256.70 H615.10" stroke="#BDBBB2" stroke-width="0.9" stroke-dasharray="0.9 1.1"/><rect x="602.65" y="253.25" width="6.90" height="6.90" rx="0.6" fill="#FDFDFC" stroke="#9A9A98" stroke-width="1"/><path d="M603.80 256.70 h4.6" stroke="#111" stroke-width="1.3"/><path d="M606.10 254.40 v4.6" stroke="#111" stroke-width="1.3"/><circle cx="620.70" cy="253.50" r="3.5" fill="#fff" stroke="#A4A4A0" stroke-width="0.9"/><circle cx="622.60" cy="255.10" r="3.6" fill="#fff" stroke="#8C8C88" stroke-width="0.9"/><circle cx="624.60" cy="256.90" r="3.8" fill="#7C7C78"/></svg>
<div style="left:755.50px;top:0.00px;width:4.50px;height:447.00px;background:linear-gradient(90deg,#86A8EE 0%,#2A5BD9 22%,#0D37BC 45%,#0A2DA8 100%);"></div>
<span class="t" id="t0" style="left:571.00px;top:11.30px;color:#1a1a1a;font-size:9.9px;transform:scaleX(0.9602);">savvytest</span>
<span class="t" id="t1" style="left:638.40px;top:11.20px;color:#1a1a1a;font-size:9.7px;transform:scaleX(0.9717);">z/OS-Projekte</span>
<span class="t" id="t2" style="left:25.40px;top:36.50px;color:#1a1a1a;font-size:9.8px;transform:scaleX(0.9266);">T99KUNDE.listructure</span>
<span class="t" id="t3" style="left:157.60px;top:36.50px;color:#1a1a1a;font-size:9.8px;transform:scaleX(0.9400);">test1.testscenario</span>
<span class="t" id="t4" style="left:276.20px;top:36.50px;color:#1a1a1a;font-size:9.8px;transform:scaleX(0.9500);">t99_schreiben.interf</span>
<span class="t" id="t5" style="left:405.00px;top:36.40px;color:#222;font-size:7.4px;transform:scaleX(0.9446);">8</span>
<span class="t" id="t6" style="left:15.00px;top:76.90px;color:#1a1a1a;font-size:9.7px;transform:scaleX(0.9263);">Struktur</span>
<span class="t" id="t7" style="left:284.00px;top:76.90px;color:#1a1a1a;font-size:9.7px;transform:scaleX(0.9319);">Verwendung</span>
<span class="t" id="t8" style="left:401.80px;top:76.90px;color:#1a1a1a;font-size:9.7px;transform:scaleX(0.9689);">Vorgabewert</span>
<span class="t" id="t9" style="left:44.40px;top:92.97px;color:#fff;font-size:9.7px;transform:scaleX(0.9341);">LiStructure T99METHD</span>
<span class="t" id="t10" style="left:60.70px;top:107.60px;color:#1a1a1a;font-size:9.7px;transform:scaleX(0.9286);">T99METHD</span>
<span class="t" id="t11" style="left:280.20px;top:107.60px;color:#1a1a1a;font-size:9.7px;transform:scaleX(0.9451);">inout</span>
<span class="t" id="t12" style="left:77.00px;top:122.23px;color:#1a1a1a;font-size:9.7px;transform:scaleX(0.9818);">STRUCT_NAME</span>
<span class="t" id="t13" style="left:280.20px;top:122.23px;color:#1a1a1a;font-size:9.7px;transform:scaleX(0.9196);">fix</span>
<span class="t" id="t14" style="left:398.40px;top:122.23px;color:#1E1EA8;font-size:9.7px;transform:scaleX(0.9411);">T99METHD</span>
<span class="t" id="t15" style="left:77.00px;top:136.85px;color:#1a1a1a;font-size:9.7px;transform:scaleX(0.9840);">STRUCT_NO</span>
<span class="t" id="t16" style="left:280.20px;top:136.85px;color:#1a1a1a;font-size:9.7px;transform:scaleX(0.9196);">fix</span>
<span class="t" id="t17" style="left:398.80px;top:136.85px;color:#1E1EA8;font-size:9.7px;transform:scaleX(0.7932);">1</span>
<span class="t" id="t18" style="left:77.00px;top:151.48px;color:#1a1a1a;font-size:9.7px;transform:scaleX(1.0457);">DATA</span>
<span class="t" id="t19" style="left:280.20px;top:151.48px;color:#1a1a1a;font-size:9.7px;transform:scaleX(0.9451);">inout</span>
<span class="t" id="t20" style="left:44.40px;top:166.11px;color:#1a1a1a;font-size:9.7px;transform:scaleX(0.9390);">LiStructure T99KUNDE</span>
<span class="t" id="t21" style="left:60.70px;top:180.74px;color:#1a1a1a;font-size:9.7px;transform:scaleX(0.9195);">T99KUNDE</span>
<span class="t" id="t22" style="left:280.20px;top:180.74px;color:#1a1a1a;font-size:9.7px;transform:scaleX(0.9451);">inout</span>
<span class="t" id="t23" style="left:77.00px;top:195.37px;color:#1a1a1a;font-size:9.7px;transform:scaleX(0.9818);">STRUCT_NAME</span>
<span class="t" id="t24" style="left:280.20px;top:195.37px;color:#1a1a1a;font-size:9.7px;transform:scaleX(0.9196);">fix</span>
<span class="t" id="t25" style="left:398.40px;top:195.37px;color:#1E1EA8;font-size:9.7px;transform:scaleX(0.9237);">T99KUNDE</span>
<span class="t" id="t26" style="left:77.00px;top:209.99px;color:#1a1a1a;font-size:9.7px;transform:scaleX(0.9840);">STRUCT_NO</span>
<span class="t" id="t27" style="left:280.20px;top:209.99px;color:#1a1a1a;font-size:9.7px;transform:scaleX(0.9196);">fix</span>
<span class="t" id="t28" style="left:398.80px;top:209.99px;color:#1E1EA8;font-size:9.7px;transform:scaleX(0.7932);">1</span>
<span class="t" id="t29" style="left:77.00px;top:224.62px;color:#1a1a1a;font-size:9.7px;transform:scaleX(1.0457);">DATA</span>
<span class="t" id="t30" style="left:280.20px;top:224.62px;color:#1a1a1a;font-size:9.7px;transform:scaleX(1.0013);">out</span>
<span class="t" id="t31" style="left:93.30px;top:239.25px;color:#1a1a1a;font-size:9.7px;transform:scaleX(0.9602);">Person</span>
<span class="t" id="t32" style="left:280.20px;top:239.25px;color:#1a1a1a;font-size:9.7px;transform:scaleX(1.0013);">out</span>
<span class="t" id="t33" style="left:93.30px;top:253.88px;color:#1a1a1a;font-size:9.7px;transform:scaleX(0.9887);">Adresse_Anz</span>
<span class="t" id="t34" style="left:280.20px;top:253.88px;color:#1a1a1a;font-size:9.7px;transform:scaleX(1.0013);">out</span>
<span class="t" id="t35" style="left:399.60px;top:253.88px;color:#1E1EA8;font-size:9.7px;transform:scaleX(0.8293);">0</span>
<span class="t" id="t36" style="left:93.30px;top:268.51px;color:#1a1a1a;font-size:9.7px;transform:scaleX(0.9713);">Adresse Tabelle</span>
<span class="t" id="t37" style="left:280.20px;top:268.51px;color:#1a1a1a;font-size:9.7px;transform:scaleX(1.0013);">out</span>
<span class="t" id="t38" style="left:109.60px;top:283.13px;color:#1a1a1a;font-size:9.7px;transform:scaleX(0.9561);">Adresse</span>
<span class="t" id="t39" style="left:280.20px;top:283.13px;color:#1a1a1a;font-size:9.7px;transform:scaleX(1.0013);">out</span>
<span class="t" id="t40" style="left:125.90px;top:297.76px;color:#1a1a1a;font-size:9.7px;transform:scaleX(0.9280);">Strasse</span>
<span class="t" id="t41" style="left:280.20px;top:297.76px;color:#1a1a1a;font-size:9.7px;transform:scaleX(1.0013);">out</span>
<span class="t" id="t42" style="left:125.90px;top:312.39px;color:#1a1a1a;font-size:9.7px;transform:scaleX(0.9018);">PLZ</span>
<span class="t" id="t43" style="left:280.20px;top:312.39px;color:#1a1a1a;font-size:9.7px;transform:scaleX(1.0013);">out</span>
<span class="t" id="t44" style="left:125.90px;top:327.02px;color:#1a1a1a;font-size:9.7px;transform:scaleX(1.0101);">Ort</span>
<span class="t" id="t45" style="left:280.20px;top:327.02px;color:#1a1a1a;font-size:9.7px;transform:scaleX(1.0013);">out</span>
<span class="t" id="t46" style="left:125.90px;top:341.65px;color:#1a1a1a;font-size:9.7px;transform:scaleX(0.9123);">Land</span>
<span class="t" id="t47" style="left:280.20px;top:341.65px;color:#1a1a1a;font-size:9.7px;transform:scaleX(1.0013);">out</span>
<span class="t" id="t48" style="left:125.90px;top:356.27px;color:#1a1a1a;font-size:9.7px;transform:scaleX(0.9498);">Sprache_Regional</span>
<span class="t" id="t49" style="left:280.20px;top:356.27px;color:#1a1a1a;font-size:9.7px;transform:scaleX(1.0013);">out</span>
<span class="t" id="t50" style="left:93.30px;top:370.90px;color:#1a1a1a;font-size:9.7px;transform:scaleX(0.9471);">Bestellung_Anz</span>
<span class="t" id="t51" style="left:280.20px;top:370.90px;color:#1a1a1a;font-size:9.7px;transform:scaleX(1.0013);">out</span>
<span class="t" id="t52" style="left:399.60px;top:370.90px;color:#1E1EA8;font-size:9.7px;transform:scaleX(0.8293);">0</span>
<span class="t" id="t53" style="left:93.30px;top:385.53px;color:#1a1a1a;font-size:9.7px;transform:scaleX(0.9389);">Bestellung Tabelle</span>
<span class="t" id="t54" style="left:280.20px;top:385.53px;color:#1a1a1a;font-size:9.7px;transform:scaleX(1.0013);">out</span>
<span class="t" id="t55" style="left:44.40px;top:400.16px;color:#1a1a1a;font-size:9.7px;transform:scaleX(0.9390);">LiStructure T99KUNDE</span>
<span class="t" id="t56" style="left:60.70px;top:414.79px;color:#1a1a1a;font-size:9.7px;transform:scaleX(0.9195);">T99KUNDE</span>
<span class="t" id="t57" style="left:280.20px;top:414.79px;color:#1a1a1a;font-size:9.7px;transform:scaleX(0.8802);">in</span>
<span class="t" id="t58" style="left:565.00px;top:36.50px;color:#1a1a1a;font-size:9.8px;transform:scaleX(0.8653);">Glied</span>
<span class="t" id="t59" style="left:642.50px;top:36.50px;color:#1a1a1a;font-size:9.8px;transform:scaleX(0.9474);">Fern</span>
<span class="t" id="t60" style="left:688.30px;top:36.50px;color:#1a1a1a;font-size:9.8px;transform:scaleX(1.0146);">Prüfb</span>
<span class="t" id="t61" style="left:583.60px;top:75.90px;color:#1a1a1a;font-size:9.7px;transform:scaleX(0.9382);">LiStructure T99METHD</span>
<span class="t" id="t62" style="left:583.60px;top:90.52px;color:#1a1a1a;font-size:9.7px;transform:scaleX(0.9411);">LiStructure T99KUNDE</span>
<span class="t" id="t63" style="left:600.60px;top:105.13px;color:#1a1a1a;font-size:9.7px;transform:scaleX(0.9439);">&lt;struct&gt; T99KUNDE</span>
<span class="t" id="t64" style="left:583.60px;top:119.75px;color:#1a1a1a;font-size:9.7px;transform:scaleX(0.9411);">LiStructure T99KUNDE</span>
<span class="t" id="t65" style="left:600.60px;top:134.37px;color:#1a1a1a;font-size:9.7px;transform:scaleX(0.9439);">&lt;struct&gt; T99KUNDE</span>
<span class="t" id="t66" style="left:617.20px;top:148.98px;color:#1a1a1a;font-size:9.7px;transform:scaleX(0.9535);">&lt;string&gt; STRUCT_NAME</span>
<span class="t" id="t67" style="left:617.20px;top:163.60px;color:#1a1a1a;font-size:9.7px;transform:scaleX(0.9534);">&lt;number&gt; STRUCT_NO</span>
<span class="t" id="t68" style="left:617.20px;top:178.22px;color:#1a1a1a;font-size:9.7px;transform:scaleX(0.9719);">&lt;struct&gt; DATA</span>
<span class="t" id="t69" style="left:633.40px;top:192.84px;color:#1a1a1a;font-size:9.7px;transform:scaleX(0.9582);">&lt;struct&gt; Person</span>
<span class="t" id="t70" style="left:633.40px;top:207.45px;color:#1a1a1a;font-size:9.7px;transform:scaleX(0.9594);">&lt;number&gt; Adresse_Anz</span>
<span class="t" id="t71" style="left:633.40px;top:222.07px;color:#1a1a1a;font-size:9.7px;transform:scaleX(0.9690);">&lt;array&gt; Adresse Tabelle</span>
<span class="t" id="t72" style="left:633.40px;top:236.69px;color:#1a1a1a;font-size:9.7px;transform:scaleX(0.9329);">&lt;number&gt; Bestellung_Anz</span>
<span class="t" id="t73" style="left:633.40px;top:251.30px;color:#1a1a1a;font-size:9.7px;transform:scaleX(0.9452);">&lt;array&gt; Bestellung Tabelle</span>
</body></html>
